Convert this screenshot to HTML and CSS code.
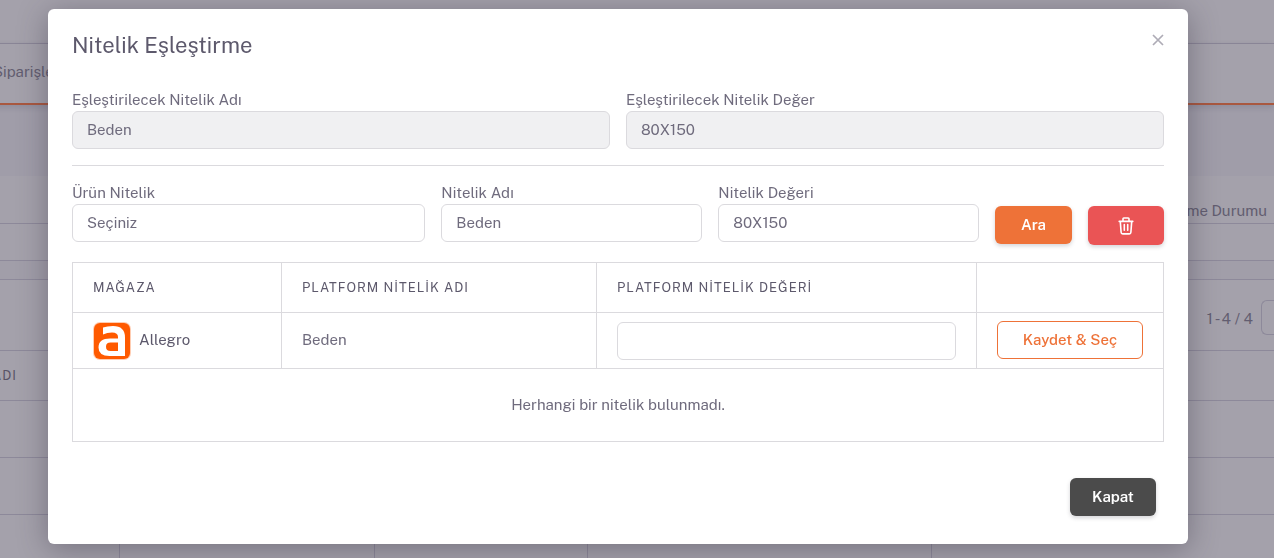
FILE: index.html
```
<!DOCTYPE html>
<html lang="tr">
<head>
<meta charset="utf-8">
<title>Nitelik Eşleştirme</title>
<link rel="stylesheet" href="styles.css">
</head>
<body>
<div class="page" aria-hidden="true">
  <div class="page-top"></div>
  <div class="page-nav"><span>Siparişler</span></div>
  <div class="page-card">
    <div class="page-tabs"><span>Eşleştirme Durumu</span></div>
    <div class="page-strip"></div>
    <div class="page-gap"></div>
    <div class="page-tools"><span>1 - 4 / 4</span><span class="page-pager"></span></div>
    <table class="page-table">
      <colgroup><col class="pc-1"><col class="pc-2"><col class="pc-3"><col class="pc-4"><col></colgroup>
      <thead><tr><th><span class="clipped">ADI</span></th><th></th><th></th><th></th><th></th></tr></thead>
      <tbody>
        <tr><td></td><td></td><td></td><td></td><td></td></tr>
        <tr><td></td><td></td><td></td><td></td><td></td></tr>
        <tr><td></td><td></td><td></td><td></td><td></td></tr>
      </tbody>
    </table>
  </div>
</div>

<div class="overlay">
  <div class="modal" role="dialog" aria-modal="true" aria-labelledby="modal-title">
    <header class="modal-header">
      <h1 class="modal-title" id="modal-title">Nitelik Eşleştirme</h1>
      <button class="close" type="button" aria-label="Kapat">
        <svg width="12" height="12" viewBox="0 0 12 12" fill="none" stroke="currentColor" stroke-width="1.7"><path d="M1 1l10 10M11 1L1 11"/></svg>
      </button>
    </header>

    <div class="pair">
      <div class="field">
        <label for="src-name">Eşleştirilecek Nitelik Adı</label>
        <input class="control" id="src-name" type="text" value="Beden" disabled>
      </div>
      <div class="field">
        <label for="src-value">Eşleştirilecek Nitelik Değer</label>
        <input class="control" id="src-value" type="text" value="80X150" disabled>
      </div>
    </div>

    <hr class="divider">

    <form class="search">
      <div class="field span-4">
        <label for="product-attr">Ürün Nitelik</label>
        <select class="control" id="product-attr"><option>Seçiniz</option></select>
      </div>
      <div class="field span-3">
        <label for="attr-name">Nitelik Adı</label>
        <input class="control" id="attr-name" type="text" value="Beden">
      </div>
      <div class="field span-3">
        <label for="attr-value">Nitelik Değeri</label>
        <input class="control" id="attr-value" type="text" value="80X150">
      </div>
      <button class="btn btn-primary" type="button">Ara</button>
      <button class="btn btn-danger" type="button" aria-label="Sil">
        <svg width="16" height="18" viewBox="0 0 16 18" fill="none" stroke="currentColor" stroke-width="1.6" stroke-linecap="round" stroke-linejoin="round"><path d="M1.200 4.400h13.600M5 4.200V1.800q0-.8.8-.8h4.400q.8 0 .8.8v2.400M2.300 4.600l.8 10.600q.1 1.700 1.600 1.700h6.600q1.500 0 1.600-1.700l.8-10.600M6.300 7.600v5.600M9.700 7.600v5.600"/></svg>
      </button>
    </form>

    <table class="results">
      <colgroup><col class="c-store"><col class="c-name"><col class="c-value"><col class="c-action"></colgroup>
      <thead>
        <tr><th>MAĞAZA</th><th>PLATFORM NİTELİK ADI</th><th>PLATFORM NİTELİK DEĞERİ</th><th></th></tr>
      </thead>
      <tbody>
        <tr>
          <td>
            <div class="store">
              <svg width="38" height="38" viewBox="0 0 38 38" aria-hidden="true"><rect width="38" height="38" rx="7" fill="#ff5a00" opacity=".3"/><rect x="1" y="1" width="36" height="36" rx="6" fill="#ff5a00"/><path fill="#fff" fill-rule="evenodd" d="M10 5.500Q14 4 20 4Q32 4 32 15.500V34H16.500Q5.500 34 5.500 25.500Q5.500 16.500 17 16.500H25V15Q25 10.500 19 10.500Q14 10.500 10 12.500ZM25 20.500H17.500Q13 20.500 13 24.700Q13 29 17.500 29H25Z"/></svg>
              <span>Allegro</span>
            </div>
          </td>
          <td class="lifted">Beden</td>
          <td><input class="control" type="text" aria-label="Platform nitelik değeri"></td>
          <td class="lifted"><button class="btn btn-outline" type="button">Kaydet &amp; Seç</button></td>
        </tr>
        <tr><td class="empty" colspan="4">Herhangi bir nitelik bulunmadı.</td></tr>
      </tbody>
    </table>

    <footer class="modal-footer">
      <button class="btn btn-dark" type="button">Kapat</button>
    </footer>
  </div>
</div>
</body>
</html>
```
FILE: styles.css
```
* { box-sizing: border-box; }

body {
  margin: 0;
  height: 100vh;
  overflow: hidden;
  background: #a09da9;
  color: #6f6b7d;
  font: 15px/22px "Public Sans", Inter, "Liberation Sans", sans-serif;
}

/* Dimmed page behind the dialog */
.page { color: #625d70; }
.page-top { height: 44px; background: #a4a1ab; border-bottom: 1px solid #8d899a; }
.page-nav {
  display: flex;
  align-items: center;
  height: 61px;
  margin-left: -7px;
  padding-bottom: 4px;
  background: #a4a1ab;
  border-bottom: 2px solid #a9583f;
  box-shadow: 0 2px 6px rgba(47, 43, 61, .15);
}
.page-card { margin-top: 71px; background: #a4a1ab; }
.page-tabs {
  display: flex;
  justify-content: flex-end;
  align-items: flex-end;
  height: 48px;
  padding: 0 7px 1px;
  border-bottom: 1px solid #8d899a;
}
.page-strip { height: 37px; border-bottom: 1px solid #8d899a; }
.page-gap { height: 19px; background: #a19ea9; border-bottom: 1px solid #8d899a; }
.page-tools {
  display: flex;
  justify-content: flex-end;
  align-items: flex-start;
  gap: 8px;
  height: 70px;
  padding-top: 20px;
  line-height: 38px;
}
.page-pager {
  width: 13px;
  height: 35px;
  border: 1px solid #8d899a;
  border-right: 0;
  border-radius: 6px 0 0 6px;
}
.page-table {
  width: 100%;
  table-layout: fixed;
  border-collapse: collapse;
}
.page-table th { height: 50px; }
.page-table td { height: 57px; }
.page-table th, .page-table td {
  padding: 0;
  border: 1px solid #8d899a;
  border-left: 0;
  color: #585366;
  text-align: left;
  font-size: 13px;
  font-weight: 400;
  letter-spacing: 1px;
}
.page-table tr > :last-child { border-right: 0; }
.pc-1 { width: 119px; }
.pc-2 { width: 255px; }
.pc-3 { width: 213px; }
.pc-4 { width: 344px; }
.clipped { display: flex; justify-content: flex-end; width: 17px; }

/* Dialog */
.overlay {
  position: fixed;
  inset: 0;
  padding: 9px 86px 14px 48px;
  overflow: hidden;
}
.modal {
  padding: 24px 24px 28px;
  background: #fff;
  border-radius: 6px;
  box-shadow: 0 5px 30px rgba(47, 43, 61, .4);
}
.modal-header {
  display: flex;
  justify-content: space-between;
  align-items: flex-start;
  margin-bottom: 32px;
}
.modal-title {
  margin: 0;
  color: #5d596c;
  font-size: 22px;
  font-weight: 400;
  line-height: 24px;
}
.close {
  display: flex;
  padding: 1px 0;
  border: 0;
  background: none;
  color: #aeacb6;
}
.pair { display: grid; grid-template-columns: 1fr 1fr; gap: 16px; }
.field { display: flex; flex-direction: column; min-width: 0; }
.control {
  width: 100%;
  height: 38px;
  padding: 0 14px;
  border: 1px solid #dbdade;
  border-radius: 6px;
  background: #fff;
  color: #6f6b7d;
  font: inherit;
  appearance: none;
}
input.control { padding-bottom: 2px; }
.control:disabled { background: #f0f0f2; opacity: 1; }
.divider { margin: 16px 0; border: 0; border-top: 1px solid #dbdade; }
.search {
  display: grid;
  grid-template-columns: repeat(12, 1fr);
  gap: 16px;
  align-items: start;
}
.span-4 { grid-column: span 4; }
.span-3 { grid-column: span 3; }
.btn {
  display: flex;
  justify-content: center;
  align-items: center;
  height: 38px;
  padding: 0;
  border: 1px solid transparent;
  border-radius: 6px;
  color: #fff;
  font: inherit;
  font-weight: 600;
  box-shadow: 0 2px 4px rgba(47, 43, 61, .2);
}
.search .btn { margin-top: 24px; }
.btn-primary { background: #ee7238; }
.btn-danger { height: 39px; background: #ea5455; }
.btn-outline {
  width: 100%;
  border-color: #ee7238;
  background: #fff;
  color: #ee7238;
  font-weight: 500;
  box-shadow: none;
}
.btn-dark { width: 86px; background: #4b4b4b; }

.results {
  width: 100%;
  margin-top: 17px;
  table-layout: fixed;
  border-collapse: collapse;
}
.c-store { width: 209px; }
.c-value { width: 380px; }
.c-action { width: 187px; }
.results th, .results td {
  padding: 8px 20px;
  border: 1px solid #dbdade;
  text-align: left;
}
.results th {
  height: 50px;
  color: #5d596c;
  font-size: 13px;
  font-weight: 400;
  letter-spacing: 1px;
}
.results td { height: 56px; }
.results .lifted { padding-top: 7px; padding-bottom: 9px; }
.store { display: flex; align-items: center; gap: 8px; color: #5d596c; }
.store span { padding-bottom: 2px; }
.results .empty { height: 73px; text-align: center; }
.modal-footer { display: flex; justify-content: flex-end; padding: 36px 8px 0; }
```
